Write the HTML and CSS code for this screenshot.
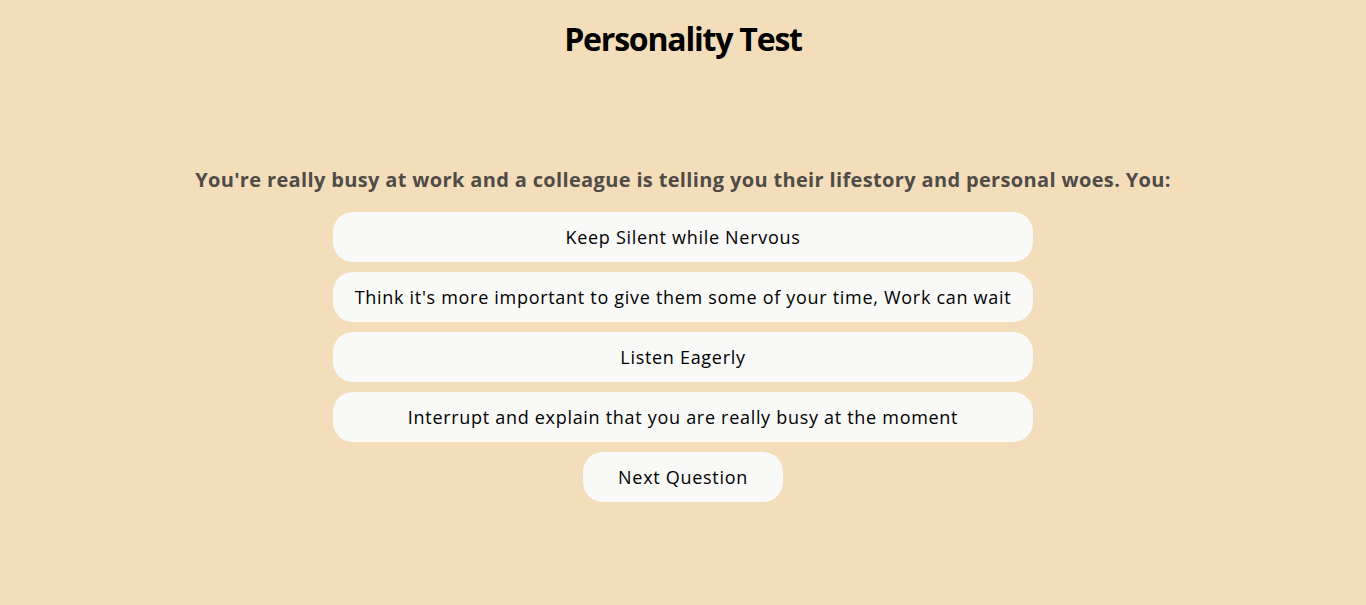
FILE: index.html
```html
<!DOCTYPE html>
<html>
<head>
<meta charset="utf-8">
<title>Personality Test</title>
<link rel="stylesheet" href="styles.css">
</head>
<body>
<h1 class="title">Personality Test</h1>
<main class="quiz">
  <h2 class="question">You're really busy at work and a colleague is telling you their lifestory and personal woes. You:</h2>
  <div class="answers">
    <button class="answer">Keep Silent while Nervous</button>
    <button class="answer">Think it's more important to give them some of your time, Work can wait</button>
    <button class="answer">Listen Eagerly</button>
    <button class="answer">Interrupt and explain that you are really busy at the moment</button>
    <button class="next">Next Question</button>
  </div>
</main>
</body>
</html>
```
FILE: styles.css
```css
html, body {
  background: #f3ddba;
}
body {
  margin: 0;
  font-family: "Trebuchet MS", "Open Sans", "Liberation Sans", sans-serif;
  color: #000;
}
.title {
  text-align: center;
  font-size: 32px;
  font-weight: bold;
  letter-spacing: -1.2px;
  margin: 0;
  padding-top: 20px;
  line-height: 37px;
}
.quiz {
  margin-top: 111px;
  display: flex;
  flex-direction: column;
  align-items: center;
}
.question {
  font-size: 20px;
  font-weight: bold;
  letter-spacing: 0.35px;
  color: #4f4b47;
  margin: 0 0 20px;
  line-height: 24px;
  text-align: center;
}
.answers {
  display: flex;
  flex-direction: column;
  align-items: center;
  gap: 10px;
}
.answer, .next {
  font-family: inherit;
  font-size: 18px;
  letter-spacing: 0.7px;
  color: #000;
  background: #f9f9f8;
  border: none;
  border-radius: 20px;
  height: 50px;
  width: 700px;
  padding: 0;
  cursor: pointer;
}
.next {
  width: 200px;
}
```
